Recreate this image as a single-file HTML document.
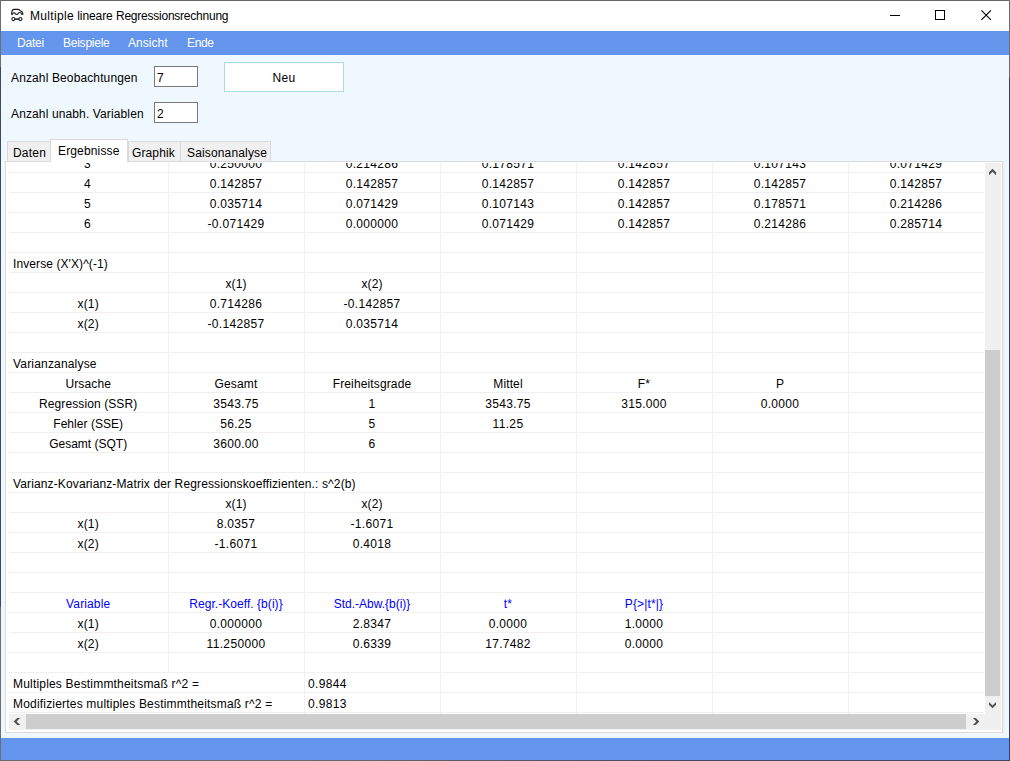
<!DOCTYPE html>
<html><head><meta charset="utf-8"><title>Multiple lineare Regressionsrechnung</title>
<style>
html,body{margin:0;padding:0;}
body{width:1010px;height:761px;overflow:hidden;position:relative;background:#f0f8ff;font-family:"Liberation Sans",sans-serif;font-size:12px;color:#000;}
div{position:absolute;box-sizing:border-box;}
#win{left:0;top:0;width:1010px;height:761px;background:#f0f8ff;}
#bt{left:0;top:0;width:1010px;height:1px;background:#666;}
#bb{left:0;top:760px;width:1010px;height:1px;background:linear-gradient(90deg,#6a6a6a 0,#6a6a6a 300px,#3e4862 700px);}
#bl{left:0;top:0;width:1px;height:761px;background:linear-gradient(#6e6e6e 0,#6e6e6e 67px,#3b4866 67px,#3b4866 607px,#6e6e6e 607px);}
#br{left:1009px;top:0;width:1px;height:761px;background:linear-gradient(#6e6e6e 0,#6e6e6e 78px,#324163 78px);}
#title{left:1px;top:1px;width:1008px;height:30px;background:#fff;}
#ttext{left:29px;top:7px;font-size:12px;white-space:nowrap;line-height:16px;}
#menu{left:1px;top:31px;width:1008px;height:24px;background:#6495ed;}
.mi{top:4px;color:#fff;font-size:12px;line-height:16px;white-space:nowrap;}
#status{left:1px;top:738px;width:1008px;height:22px;background:#6495ed;}
.lbl{left:11px;white-space:nowrap;font-size:12px;line-height:16px;letter-spacing:0.125px;}
.inp{left:154px;width:44px;height:21px;border:1px solid #7a7a7a;background:#fff;padding-left:2px;padding-top:2px;line-height:19px;font-size:12px;}
#btn{left:224px;top:62px;width:120px;height:30px;border:1px solid #add8e6;background:#fff;text-align:center;line-height:30px;font-size:12px;letter-spacing:0.3px;}
.tab{top:141px;height:21px;background:#f0f0f0;border:1px solid #d9d9d9;border-bottom:none;font-size:12px;white-space:nowrap;}
.tab span,#tabsel span{position:absolute;top:3px;line-height:16px;white-space:nowrap;}
#tabsel{left:50px;top:139px;width:78px;height:23px;background:#fff;border:1px solid #d9d9d9;border-bottom:none;font-size:12px;}
#panel{left:5px;top:161px;width:998px;height:572px;background:#fff;border:1px solid #dadada;}
#psh{left:1003px;top:161px;width:2px;height:573px;background:#f0f0f0;}
#grid{left:8px;top:163px;width:977px;height:551px;overflow:hidden;background:#fff;}
.hl{left:0;width:975px;height:1px;background:#f0f0f0;}
.vl{top:0;width:1px;height:551px;background:#f0f0f0;}
.hide{width:1px;height:19px;background:#fff;}
.c{height:19px;line-height:19px;text-align:center;white-space:nowrap;font-size:12px;}
.b{color:#0000ff;}
.c,.l{letter-spacing:0.13px;}
.n{letter-spacing:0.33px;}
.l{height:19px;line-height:19px;white-space:nowrap;font-size:12px;}
#vs{left:985px;top:163px;width:16px;height:567px;background:#f0f0f0;}
#vth{left:985px;top:350px;width:15px;height:346px;background:#cdcdcd;}
#hs{left:9px;top:714px;width:992px;height:16px;background:#f0f0f0;}
#hth{left:26px;top:714px;width:940px;height:15px;background:#cdcdcd;}
svg{position:absolute;overflow:visible;}
</style></head><body>
<div id="win"></div>
<div id="title">
 <svg style="left:7px;top:4px" width="20" height="20" viewBox="0 0 20 20"><path d="M3.7 9.7 L3.7 8.2 C3.9 6 4.7 4.4 6 4.4 L10.2 4.4 C11 4.4 11.4 4.9 12 5.4 L13.7 6.5 C14.7 7.2 14.9 8 14.9 9.7" fill="none" stroke="#1a1a1a" stroke-width="1.2"/><path d="M3.7 9.3 L4.6 9.3 C4.7 7.3 6.8 7.3 7.2 8.8 C7.7 9.6 9.5 9.6 10 8.8 C10.5 6.9 13.4 7 13.7 9.3 L14.9 9.3" fill="none" stroke="#1a1a1a" stroke-width="1.1"/><circle cx="5.4" cy="14.05" r="1.55" fill="none" stroke="#1a1a1a" stroke-width="1.1"/><circle cx="12.4" cy="14.05" r="1.55" fill="none" stroke="#1a1a1a" stroke-width="1.1"/><path d="M6.9 14.05 H10.9" stroke="#1a1a1a" stroke-width="1.5"/></svg>
 <div id="ttext"><span style="letter-spacing:0.33px">Multiple</span><span style="letter-spacing:-0.08px"> lineare </span><span style="letter-spacing:-0.235px">Regressionsrechnung</span></div>
 <svg style="left:889px;top:14px" width="12" height="2"><rect x="0" y="0" width="10" height="1" fill="#000"/></svg>
 <svg style="left:934px;top:9px" width="12" height="12"><rect x="0.5" y="0.5" width="9" height="9" fill="none" stroke="#000" stroke-width="1"/></svg>
 <svg style="left:980px;top:9px" width="12" height="12"><path d="M0.4 0.4 L9.9 9.9 M9.9 0.4 L0.4 9.9" stroke="#000" stroke-width="1.1" fill="none"/></svg>
</div>
<div id="menu">
 <div class="mi" style="left:16px;letter-spacing:-0.2px">Datei</div>
 <div class="mi" style="left:62px;letter-spacing:-0.24px">Beispiele</div>
 <div class="mi" style="left:127px;letter-spacing:0.05px">Ansicht</div>
 <div class="mi" style="left:186px;letter-spacing:-0.35px">Ende</div>
</div>
<div class="lbl" style="top:70px">Anzahl Beobachtungen</div>
<div class="lbl" style="top:106px">Anzahl unabh. Variablen</div>
<div class="inp" style="top:66px">7</div>
<div class="inp" style="top:102px">2</div>
<div id="btn">Neu</div>
<div class="tab" style="left:7px;width:44px"><span style="left:5px;letter-spacing:0.2px">Daten</span></div>
<div class="tab" style="left:128px;width:53px"><span style="left:3px;letter-spacing:0.12px">Graphik</span></div>
<div class="tab" style="left:180px;width:91px"><span style="left:6px;letter-spacing:0.15px">Saisonanalyse</span></div>
<div id="psh"></div>
<div id="panel"></div>
<div id="tabsel"><span style="left:7px;letter-spacing:0.15px">Ergebnisse</span></div>
<div id="grid">
<div class="vl" style="left:160px"></div>
<div class="vl" style="left:296px"></div>
<div class="vl" style="left:432px"></div>
<div class="vl" style="left:568px"></div>
<div class="vl" style="left:704px"></div>
<div class="vl" style="left:840px"></div>
<div class="hide" style="left:160px;top:310px;height:19px"></div>
<div class="hide" style="left:296px;top:310px;height:19px"></div>
<div class="hide" style="left:160px;top:510px;height:19px"></div>
<div class="hide" style="left:160px;top:530px;height:21px"></div>
<div class="hl" style="top:9px;left:1px"></div>
<div class="hl" style="top:29px;left:1px"></div>
<div class="hl" style="top:49px;left:1px"></div>
<div class="hl" style="top:69px;left:1px"></div>
<div class="hl" style="top:89px;left:1px"></div>
<div class="hl" style="top:109px;left:1px"></div>
<div class="hl" style="top:129px;left:1px"></div>
<div class="hl" style="top:149px;left:1px"></div>
<div class="hl" style="top:169px;left:1px"></div>
<div class="hl" style="top:189px;left:1px"></div>
<div class="hl" style="top:209px;left:1px"></div>
<div class="hl" style="top:229px;left:1px"></div>
<div class="hl" style="top:249px;left:1px"></div>
<div class="hl" style="top:269px;left:1px"></div>
<div class="hl" style="top:289px;left:1px"></div>
<div class="hl" style="top:309px;left:1px"></div>
<div class="hl" style="top:329px;left:1px"></div>
<div class="hl" style="top:349px;left:1px"></div>
<div class="hl" style="top:369px;left:1px"></div>
<div class="hl" style="top:389px;left:1px"></div>
<div class="hl" style="top:409px;left:1px"></div>
<div class="hl" style="top:429px;left:1px"></div>
<div class="hl" style="top:449px;left:1px"></div>
<div class="hl" style="top:469px;left:1px"></div>
<div class="hl" style="top:489px;left:1px"></div>
<div class="hl" style="top:509px;left:1px"></div>
<div class="hl" style="top:529px;left:1px"></div>
<div class="hl" style="top:549px;left:1px"></div>
<div class="c n" style="left:0px;top:-8px;width:159px">3</div>
<div class="c n" style="left:160px;top:-8px;width:136px">0.250000</div>
<div class="c n" style="left:296px;top:-8px;width:136px">0.214286</div>
<div class="c n" style="left:432px;top:-8px;width:136px">0.178571</div>
<div class="c n" style="left:568px;top:-8px;width:136px">0.142857</div>
<div class="c n" style="left:704px;top:-8px;width:136px">0.107143</div>
<div class="c n" style="left:840px;top:-8px;width:136px">0.071429</div>
<div class="c n" style="left:0px;top:12px;width:159px">4</div>
<div class="c n" style="left:160px;top:12px;width:136px">0.142857</div>
<div class="c n" style="left:296px;top:12px;width:136px">0.142857</div>
<div class="c n" style="left:432px;top:12px;width:136px">0.142857</div>
<div class="c n" style="left:568px;top:12px;width:136px">0.142857</div>
<div class="c n" style="left:704px;top:12px;width:136px">0.142857</div>
<div class="c n" style="left:840px;top:12px;width:136px">0.142857</div>
<div class="c n" style="left:0px;top:32px;width:159px">5</div>
<div class="c n" style="left:160px;top:32px;width:136px">0.035714</div>
<div class="c n" style="left:296px;top:32px;width:136px">0.071429</div>
<div class="c n" style="left:432px;top:32px;width:136px">0.107143</div>
<div class="c n" style="left:568px;top:32px;width:136px">0.142857</div>
<div class="c n" style="left:704px;top:32px;width:136px">0.178571</div>
<div class="c n" style="left:840px;top:32px;width:136px">0.214286</div>
<div class="c n" style="left:0px;top:52px;width:159px">6</div>
<div class="c n" style="left:160px;top:52px;width:136px">-0.071429</div>
<div class="c n" style="left:296px;top:52px;width:136px">0.000000</div>
<div class="c n" style="left:432px;top:52px;width:136px">0.071429</div>
<div class="c n" style="left:568px;top:52px;width:136px">0.142857</div>
<div class="c n" style="left:704px;top:52px;width:136px">0.214286</div>
<div class="c n" style="left:840px;top:52px;width:136px">0.285714</div>
<div class="c" style="left:160px;top:112px;width:136px">x(1)</div>
<div class="c" style="left:296px;top:112px;width:136px">x(2)</div>
<div class="c" style="left:0.6999999999999993px;top:132px;width:159px">x(1)</div>
<div class="c n" style="left:160px;top:132px;width:136px">0.714286</div>
<div class="c n" style="left:296px;top:132px;width:136px">-0.142857</div>
<div class="c" style="left:0.6999999999999993px;top:152px;width:159px">x(2)</div>
<div class="c n" style="left:160px;top:152px;width:136px">-0.142857</div>
<div class="c n" style="left:296px;top:152px;width:136px">0.035714</div>
<div class="c" style="left:0.6999999999999993px;top:212px;width:159px">Ursache</div>
<div class="c" style="left:160px;top:212px;width:136px">Gesamt</div>
<div class="c" style="left:296px;top:212px;width:136px">Freiheitsgrade</div>
<div class="c" style="left:432px;top:212px;width:136px">Mittel</div>
<div class="c" style="left:568px;top:212px;width:136px">F*</div>
<div class="c" style="left:704px;top:212px;width:136px">P</div>
<div class="c" style="left:0.6999999999999993px;top:232px;width:159px;letter-spacing:0.1px">Regression (SSR)</div>
<div class="c n" style="left:160px;top:232px;width:136px">3543.75</div>
<div class="c n" style="left:296px;top:232px;width:136px">1</div>
<div class="c n" style="left:432px;top:232px;width:136px">3543.75</div>
<div class="c n" style="left:568px;top:232px;width:136px">315.000</div>
<div class="c n" style="left:704px;top:232px;width:136px">0.0000</div>
<div class="c" style="left:0.6999999999999993px;top:252px;width:159px;letter-spacing:0.04px">Fehler (SSE)</div>
<div class="c n" style="left:160px;top:252px;width:136px">56.25</div>
<div class="c n" style="left:296px;top:252px;width:136px">5</div>
<div class="c n" style="left:432px;top:252px;width:136px">11.25</div>
<div class="c" style="left:0.6999999999999993px;top:272px;width:159px;letter-spacing:0px">Gesamt (SQT)</div>
<div class="c n" style="left:160px;top:272px;width:136px">3600.00</div>
<div class="c n" style="left:296px;top:272px;width:136px">6</div>
<div class="c" style="left:160px;top:332px;width:136px">x(1)</div>
<div class="c" style="left:296px;top:332px;width:136px">x(2)</div>
<div class="c" style="left:0.6999999999999993px;top:352px;width:159px">x(1)</div>
<div class="c n" style="left:160px;top:352px;width:136px">8.0357</div>
<div class="c n" style="left:296px;top:352px;width:136px">-1.6071</div>
<div class="c" style="left:0.6999999999999993px;top:372px;width:159px">x(2)</div>
<div class="c n" style="left:160px;top:372px;width:136px">-1.6071</div>
<div class="c n" style="left:296px;top:372px;width:136px">0.4018</div>
<div class="c b" style="left:0.6999999999999993px;top:432px;width:159px">Variable</div>
<div class="c b" style="left:160px;top:432px;width:136px;letter-spacing:0.05px">Regr.-Koeff. {b(i)}</div>
<div class="c b" style="left:296px;top:432px;width:136px;letter-spacing:0px">Std.-Abw.{b(i)}</div>
<div class="c b" style="left:432px;top:432px;width:136px">t*</div>
<div class="c b" style="left:568px;top:432px;width:136px">P{&gt;|t*|}</div>
<div class="c" style="left:0.6999999999999993px;top:452px;width:159px">x(1)</div>
<div class="c n" style="left:160px;top:452px;width:136px">0.000000</div>
<div class="c n" style="left:296px;top:452px;width:136px">2.8347</div>
<div class="c n" style="left:432px;top:452px;width:136px">0.0000</div>
<div class="c n" style="left:568px;top:452px;width:136px">1.0000</div>
<div class="c" style="left:0.6999999999999993px;top:472px;width:159px">x(2)</div>
<div class="c n" style="left:160px;top:472px;width:136px">11.250000</div>
<div class="c n" style="left:296px;top:472px;width:136px">0.6339</div>
<div class="c n" style="left:432px;top:472px;width:136px">17.7482</div>
<div class="c n" style="left:568px;top:472px;width:136px">0.0000</div>
<div class="l" style="left:5px;top:92px;letter-spacing:0.09px">Inverse (X'X)^(-1)</div>
<div class="l" style="left:5px;top:192px;letter-spacing:0.18px">Varianzanalyse</div>
<div class="l" style="left:5px;top:312px">Varianz-Kovarianz-Matrix der Regressionskoeffizienten.: s^2(b)</div>
<div class="l" style="left:5px;top:512px;letter-spacing:0.19px">Multiples Bestimmtheitsma&szlig; r^2 =</div>
<div class="l n" style="left:300px;top:512px">0.9844</div>
<div class="l" style="left:5px;top:532px;letter-spacing:0.19px">Modifiziertes multiples Bestimmtheitsma&szlig; r^2 =</div>
<div class="l n" style="left:300px;top:532px">0.9813</div>
</div>
<div id="vs"></div><div id="vth"></div>
<div id="hs"></div><div id="hth"></div>
<svg style="left:985px;top:163px" width="16" height="17"><path d="M7.5 5.8 L11 9.3 L11 12.2 L7.5 8.7 L4 12.2 L4 9.3 Z" fill="#505050"/></svg>
<svg style="left:985px;top:697px" width="16" height="17"><path d="M7.5 11.3 L11 7.8 L11 4.9 L7.5 8.4 L4 4.9 L4 7.8 Z" fill="#505050"/></svg>
<svg style="left:9px;top:714px" width="17" height="16"><path d="M4.7 7.5 L8.2 4 L11.1 4 L7.6 7.5 L11.1 11 L8.2 11 Z" fill="#505050"/></svg>
<svg style="left:968px;top:714px" width="17" height="16"><path d="M11.3 7.5 L7.8 4 L4.9 4 L8.4 7.5 L4.9 11 L7.8 11 Z" fill="#505050"/></svg>
<div id="status"></div>
<div id="bt"></div><div id="bb"></div><div id="bl"></div><div id="br"></div>
</body></html>
